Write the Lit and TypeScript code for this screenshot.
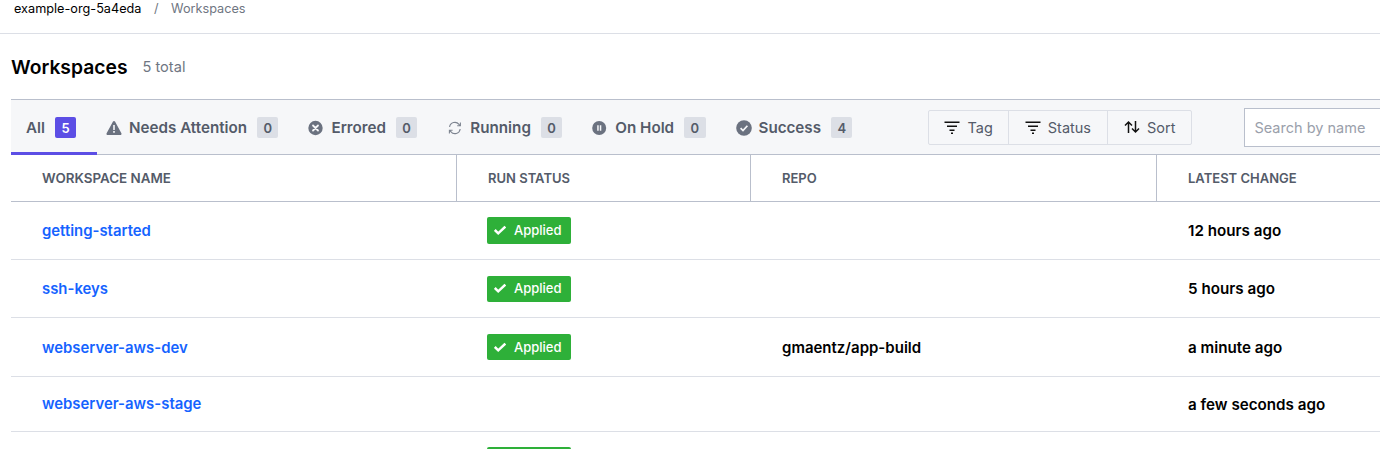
import { css, html, LitElement, svg } from "lit";
import { customElement } from "lit/decorators.js";

interface Tab {
  label: string;
  count: number;
  icon?: string;
}

interface Row {
  name: string;
  applied: boolean;
  repo: string;
  change: string;
  size?: string;
}

const TABS: Tab[] = [
  { label: "All", count: 5 },
  { label: "Needs Attention", count: 0, icon: "warn" },
  { label: "Errored", count: 0, icon: "error" },
  { label: "Running", count: 0, icon: "run" },
  { label: "On Hold", count: 0, icon: "hold" },
  { label: "Success", count: 4, icon: "ok" },
];

const ROWS: Row[] = [
  { name: "getting-started", applied: true, repo: "", change: "12 hours ago", size: "big" },
  { name: "ssh-keys", applied: true, repo: "", change: "5 hours ago" },
  { name: "webserver-aws-dev", applied: true, repo: "gmaentz/app-build", change: "a minute ago", size: "tall" },
  { name: "webserver-aws-stage", applied: false, repo: "", change: "a few seconds ago", size: "short" },
  { name: "", applied: true, repo: "", change: "", size: "big" },
];

const tabIcon = (name?: string) => {
  switch (name) {
    case "warn":
      return svg`<svg class="ico" viewBox="0 0 16 16"><path fill="#6b7280" d="M8 1c.4 0 .8.2 1 .6l6.4 11.6c.4.8-.1 1.8-1 1.8H1.6c-.9 0-1.4-1-1-1.8L7 1.6c.2-.4.6-.6 1-.6z"/><path fill="#f6f7f9" d="M7.2 5h1.6v5H7.2zM7.2 11h1.6v1.7H7.2z"/></svg>`;
    case "error":
      return svg`<svg class="ico" viewBox="0 0 16 16"><circle cx="7.5" cy="8" r="7.2" fill="#6b7280"/><path stroke="#f6f7f9" stroke-width="1.8" stroke-linecap="round" d="M5 5.5l5 5M10 5.5l-5 5"/></svg>`;
    case "run":
      return svg`<svg class="ico" viewBox="0 0 16 16" fill="none" stroke="#7d8490" stroke-width="1.1"><path d="M2.6 7A5.3 5.3 0 0 1 12 4.4L13.4 5.8M13.4 2.4v3.4h-3.2"/><path d="M13.2 9A5.3 5.3 0 0 1 3.8 11.6L2.4 10.2M2.4 13.6v-3.4h3.2"/></svg>`;
    case "hold":
      return svg`<svg class="ico" viewBox="0 0 16 16"><circle cx="7.2" cy="8" r="7" fill="#6b7280"/><path fill="#f6f7f9" d="M5.2 5.2h1.5v5.6H5.2zM7.8 5.2h1.5v5.6H7.8z"/></svg>`;
    case "ok":
      return svg`<svg class="ico" viewBox="0 0 16 16"><circle cx="8" cy="8" r="7.8" fill="#6b7280"/><path fill="none" stroke="#f6f7f9" stroke-width="1.7" d="M4.6 8.2l2.4 2.4 4.4-4.8"/></svg>`;
  }
  return null;
};

const filterIcon = svg`<svg class="tool-ico" viewBox="0 0 16 16"><path fill="#111" d="M.5 2.5h15v1.4H.5zM3 6.5h10v1.4H3zM5.5 10.5h5v1.4h-5zM7 13.6h2v1.3H7z"/></svg>`;
const sortIcon = svg`<svg class="tool-ico" viewBox="0 0 16 16" fill="none" stroke="#111" stroke-width="1.5"><path d="M4.5 14V3M1 6.5l3.5-3.5L8 6.5M11.5 2v11M8 9.5l3.5 3.5L15 9.5"/></svg>`;

@customElement("app-root")
export class AppRoot extends LitElement {
  static styles = css`
    :host {
      display: block;
      height: 449px;
      overflow: hidden;
      background: #fff;
      font-family: Inter, "Liberation Sans", sans-serif;
      color: #000;
    }
    .crumbs {
      display: flex;
      height: 34px;
      box-sizing: border-box;
      padding: 1px 0 0 14px;
      font-size: 12.7px;
      line-height: 15px;
      border-bottom: 1px solid #dcdfe6;
    }
    .crumbs .sep {
      margin: 0 12.5px;
      color: #6f7682;
    }
    .crumbs .cur {
      color: #6f7682;
    }
    .title {
      display: flex;
      align-items: center;
      height: 65px;
      box-sizing: border-box;
      padding-top: 1px;
      margin-left: 11px;
    }
    .title h1 {
      margin: 0;
      font-size: 19.3px;
      font-weight: 600;
    }
    .title span {
      margin-left: 15px;
      font-size: 14.6px;
      color: #6f7682;
    }
    .main {
      margin-left: 11px;
    }
    .bar {
      display: flex;
      align-items: stretch;
      height: 56px;
      box-sizing: border-box;
      background: #f6f7f9;
      border-top: 1px solid #b9bfcc;
      border-bottom: 1px solid #b9bfcc;
    }
    .tab {
      display: flex;
      align-items: center;
      box-sizing: border-box;
      height: 55px;
      padding: 0 15px;
      font-size: 15.2px;
      font-weight: 600;
      color: #545b69;
      white-space: nowrap;
      flex-shrink: 0;
    }
    .tab.active {
      padding: 3px 21px 0 15px;
      border-bottom: 3px solid #5c4ee5;
    }
    .tab.active + .tab {
      padding-left: 9px;
    }
    .ico {
      width: 16px;
      height: 16px;
      margin-right: 7px;
    }
    .count {
      display: inline-flex;
      align-items: center;
      justify-content: center;
      width: 21.4px;
      height: 21px;
      margin-left: 10px;
      border-radius: 2px;
      background: #dcdfe6;
      font-size: 13px;
      font-weight: 600;
      color: #545b69;
    }
    .active .count {
      width: 21px;
      background: #5c4ee5;
      color: #fff;
    }
    .tools {
      display: flex;
      flex-shrink: 0;
      align-self: center;
      margin-left: 61px;
      height: 35px;
      box-sizing: border-box;
      border: 1px solid #dcdfe6;
      border-radius: 2px;
    }
    .tool {
      display: flex;
      align-items: center;
      padding: 0 16px;
      font-size: 14.5px;
      color: #545b69;
      border-right: 1px solid #dcdfe6;
    }
    .tool:first-child {
      padding: 0 15px;
    }
    .tool:last-child {
      border-right: 0;
    }
    .tool-ico {
      width: 16px;
      height: 16px;
      margin-right: 7px;
    }
    .search {
      display: flex;
      flex-shrink: 0;
      align-items: center;
      align-self: center;
      margin-left: 52px;
      width: 200px;
      height: 39px;
      box-sizing: border-box;
      padding-left: 9px;
      background: #fff;
      border: 1px solid #b9bfcc;
      font-size: 14.5px;
      color: #9aa0ab;
    }
    .row {
      display: grid;
      grid-template-columns: 445px 294px 406px 1fr;
      align-items: center;
      height: 58px;
      box-sizing: border-box;
      border-bottom: 1px solid #dcdfe6;
    }
    .row > div {
      padding-left: 31px;
    }
    .row.tall {
      height: 59px;
    }
    .row.tall .name {
      padding-top: 1px;
    }
    .row.short {
      height: 55px;
    }
    .row.head {
      height: 47px;
      border-bottom: 1px solid #b9bfcc;
      font-size: 13px;
      font-weight: 600;
      color: #545b69;
    }
    .row.head > div {
      display: flex;
      align-items: center;
      height: 100%;
      box-sizing: border-box;
      border-left: 1px solid #b9bfcc;
    }
    .row.head > div:first-child {
      font-size: 13.4px;
      border-left: 0;
    }
    .name {
      color: #1563ff;
      font-size: 14.9px;
      font-weight: 600;
    }
    .row > .strong {
      padding-left: 32px;
      font-size: 15px;
      font-weight: 600;
    }
    .row > .strong:last-child {
      font-size: 15.2px;
    }
    .badge {
      display: inline-flex;
      align-items: center;
      height: 26px;
      width: 84px;
      box-sizing: border-box;
      padding: 0 0 1px 7px;
      border-radius: 2px;
      background: #2eb039;
      color: #fff;
      font-size: 13px;
      font-weight: 500;
      vertical-align: middle;
    }
    .row.big .badge {
      height: 27px;
      margin-top: -1px;
    }
    .badge svg {
      width: 12px;
      height: 12px;
      margin-right: 8px;
    }
  `;

  render() {
    return html`
      <div class="crumbs">
        <span>example-org-5a4eda</span><span class="sep">/</span><span class="cur">Workspaces</span>
      </div>
      <div class="title"><h1>Workspaces</h1><span>5 total</span></div>
      <div class="main">
        <div class="bar">
          ${TABS.map(
            (t, i) => html`<div class="tab ${i === 0 ? "active" : ""}">
              ${tabIcon(t.icon)}${t.label}<span class="count">${t.count}</span>
            </div>`
          )}
          <div class="tools">
            <div class="tool">${filterIcon}Tag</div>
            <div class="tool">${filterIcon}Status</div>
            <div class="tool">${sortIcon}Sort</div>
          </div>
          <div class="search">Search by name</div>
        </div>
        <div class="row head">
          <div>WORKSPACE NAME</div>
          <div>RUN STATUS</div>
          <div>REPO</div>
          <div>LATEST CHANGE</div>
        </div>
        ${ROWS.map(
          (r) => html`<div class="row ${r.size ?? ""}">
            <div class="name">${r.name}</div>
            <div>
              ${r.applied
                ? html`<span class="badge"
                    ><svg viewBox="0 0 12 12"><path fill="none" stroke="#fff" stroke-width="2.5" d="M.8 6l3.4 3.3L11.3 2.6" /></svg>Applied</span
                  >`
                : ""}
            </div>
            <div class="strong">${r.repo}</div>
            <div class="strong">${r.change}</div>
          </div>`
        )}
      </div>
    `;
  }
}
